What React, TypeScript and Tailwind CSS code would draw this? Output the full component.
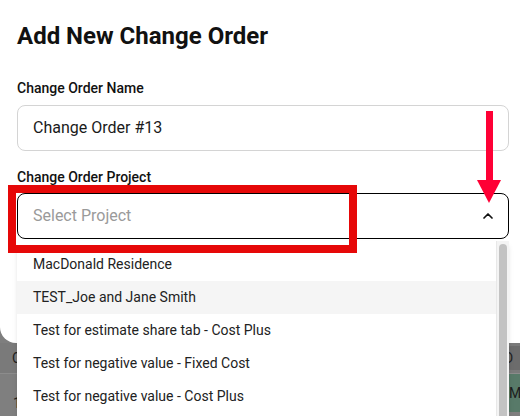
import React from "react";

const projects = [
  "MacDonald Residence",
  "TEST_Joe and Jane Smith",
  "Test for estimate share tab - Cost Plus",
  "Test for negative value - Fixed Cost",
  "Test for negative value - Cost Plus",
];

const App = () => {
  return (
    <div
      className="relative flex h-[416px] w-[520px] flex-col overflow-hidden bg-[#7e7e7e]"
      style={{ fontFamily: "Roboto, 'Liberation Sans', sans-serif" }}
    >
      {/* modal */}
      <div className="relative z-10 h-[343px] w-[530px] shrink-0 rounded-bl-2xl bg-white px-[17px] pt-[22px]">
        <h1 className="text-[24px] font-bold leading-[28px] text-[#111]">Add New Change Order</h1>

        <label className="mt-[30px] block text-[14px] font-medium leading-[16px] text-[#111]">
          Change Order Name
        </label>
        <div className="mt-[9px] flex h-[46px] w-[492px] items-center rounded-lg border border-[#d4d4d4] px-[15px] text-[16px] text-[#1a1a1a]">
          Change Order #13
        </div>

        <label className="mt-[18px] block text-[14px] font-medium leading-[16px] text-[#111]">
          Change Order Project
        </label>
        <div className="relative mt-[8px] w-[492px]">
          <div className="flex h-[46px] items-center justify-between rounded-lg border border-black pl-[15px] pr-[12px] text-[16px] text-[#9a9a9a]">
            <span>Select Project</span>
            <svg width="16" height="16" viewBox="0 0 24 24" fill="none" stroke="#111" strokeWidth="2.6" strokeLinecap="round" strokeLinejoin="round">
              <path d="M6 15l6-6 6 6" />
            </svg>
          </div>

          {/* open list */}
          <div className="absolute left-0 right-0 top-full z-20 mt-[2px] flex h-[200px] bg-white shadow-md">
            <ul className="flex-1 pt-[7px]">
              {projects.map((p, i) => (
                <li
                  key={i}
                  className={`flex h-[33px] items-center px-[16px] text-[14px] text-[#222] ${i === 1 ? "bg-[#f5f5f5]" : ""}`}
                >
                  {p}
                </li>
              ))}
            </ul>
            <div className="w-[13px] border-l border-[#e8e8e8] bg-[#f4f4f4] px-[2px] pt-[3px]">
              <div className="h-[190px] rounded-full bg-[#c3c3c3]" />
            </div>
          </div>
        </div>
      </div>

      {/* page behind overlay */}
      <div className="flex h-[31px] items-center justify-between border-b border-[#8c8c8c] bg-[#7a7a7a] pl-[12px] text-[14px] text-[#222]">
        <span>C</span>
        <span className="flex h-[24px] w-[20px] items-center rounded-l-full bg-[#6c6c6c] pl-[4px]">D</span>
      </div>
      <div className="flex flex-1 items-end justify-between bg-[#7f7f7f] pb-[2px] pl-[13px] text-[14px] text-[#222]">
        <span>1</span>
        <span className="mb-[-2px] flex h-[38px] w-[12px] items-center self-start bg-[#587a69] pl-[1px] text-[#1d1d1d]">Ma</span>
      </div>

      {/* annotations */}
      <div className="pointer-events-none absolute left-[8px] top-[185px] z-30 h-[68px] w-[349px] border-[8px] border-[#e60808]" />
      <div className="pointer-events-none absolute left-[477px] top-[111px] z-30 flex w-[24px] flex-col items-center">
        <div className="h-[69px] w-[7px] bg-[#ff0035]" />
        <div className="h-0 w-0 border-x-[12px] border-t-[23px] border-x-transparent border-t-[#ff0035]" />
      </div>
    </div>
  );
};

export default App;
